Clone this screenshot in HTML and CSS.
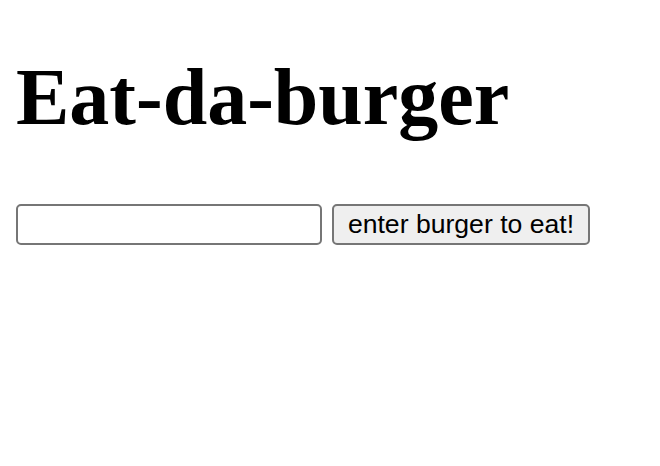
FILE: index.html
```html
<!DOCTYPE html>
<html>
<head>
<meta charset="utf-8">
<link rel="stylesheet" href="styles.css">
</head>
<body>
<h1 class="title">Eat-da-burger</h1>
<form class="burger-form">
  <input class="burger-input" type="text">
  <button class="burger-btn" type="button">enter burger to eat!</button>
</form>
</body>
</html>
```
FILE: styles.css
```css
html, body { background: #fff; }
body {
  margin: 0;
  padding: 0 16px;
  font-family: "Liberation Serif", serif;
}
.title {
  font-family: "Liberation Serif", serif;
  font-weight: bold;
  font-size: 80px;
  line-height: 90px;
  margin: 52px 0 0 0;
  color: #000;
}
.burger-form {
  display: flex;
  align-items: center;
  gap: 10px;
  margin-top: 62px;
}
.burger-input {
  box-sizing: border-box;
  width: 306px;
  height: 41px;
  border: 2px solid #767676;
  border-radius: 5px;
  background: #fff;
  margin: 0;
  padding: 2px 4px;
}
.burger-btn {
  box-sizing: border-box;
  height: 41px;
  width: 258px;
  border: 2px solid #767676;
  border-radius: 5px;
  background: #efefef;
  font-family: "Liberation Sans", Arial, sans-serif;
  font-size: 26.6px;
  color: #000;
  margin: 0;
  padding: 0 8px;
}
```
